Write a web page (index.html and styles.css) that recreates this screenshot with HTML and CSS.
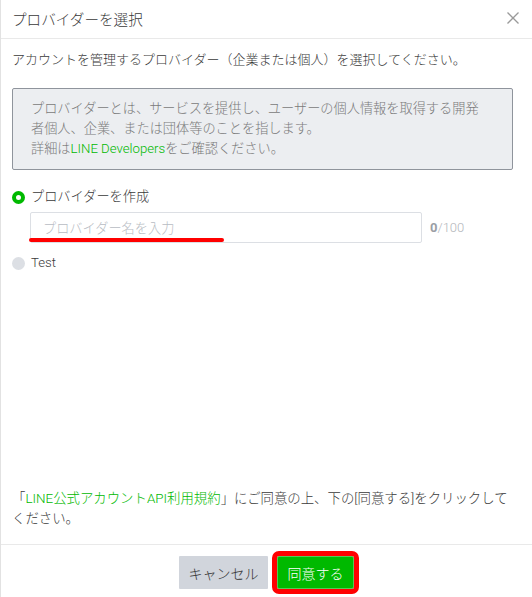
FILE: index.html
```html
<!DOCTYPE html>
<html lang="ja">
<head>
<meta charset="utf-8">
<link rel="stylesheet" href="styles.css">
</head>
<body>
<div class="modal">
  <header class="modal-header">
    <h1 class="modal-title">プロバイダーを選択</h1>
    <button class="close" aria-label="close">
      <svg width="12" height="12" viewBox="0 0 12 12"><path d="M0.5 0.5 L11.5 11.5 M11.5 0.5 L0.5 11.5" stroke="#9a9a9a" stroke-width="1.3" fill="none"/></svg>
    </button>
  </header>
  <main class="modal-body">
    <p class="lead">アカウントを管理するプロバイダー（企業または個人）を選択してください。</p>
    <div class="info">
      <p>プロバイダーとは、サービスを提供し、ユーザーの個人情報を取得する開発者個人、企業、または団体等のことを指します。</p>
      <p>詳細は<a class="link">LINE Developers</a>をご確認ください。</p>
    </div>
    <div class="options">
      <label class="option">
        <span class="radio checked"></span>
        <span>プロバイダーを作成</span>
      </label>
      <div class="input-row">
        <div class="input-wrap">
          <div class="input">プロバイダー名を入力</div>
          <span class="mark"></span>
        </div>
        <span class="count"><b>0</b>/100</span>
      </div>
      <label class="option">
        <span class="radio"></span>
        <span>Test</span>
      </label>
    </div>
    <p class="terms">「<a class="link">LINE公式アカウントAPI利用規約</a>」にご同意の上、下の[同意する]をクリックしてください。</p>
  </main>
  <footer class="modal-footer">
    <button class="btn btn-cancel">キャンセル</button>
    <button class="btn btn-agree">同意する</button>
  </footer>
</div>
</body>
</html>
```
FILE: styles.css
```css
* { box-sizing: border-box; }
html, body { margin: 0; padding: 0; background: #fff; }
body {
  font-family: Roboto, "Noto Sans CJK JP", sans-serif;
  color: #3a3a3a;
  font-size: 13px;
  font-weight: 300;
}
p { margin: 0; }
.modal {
  width: 532px;
  height: 597px;
  border-left: 1px solid #e2e2e2;
  display: flex;
  flex-direction: column;
}
.modal-header {
  height: 39px;
  border-bottom: 1px solid #e9e9e9;
  display: flex;
  align-items: center;
  justify-content: space-between;
  padding: 0 13px 2px 11px;
}
.modal-title {
  margin: 0;
  font-size: 14.6px;
  font-weight: 300;
  color: #3a3a3a;
}
.close {
  border: 0;
  background: none;
  padding: 0;
  width: 12px;
  height: 12px;
  display: flex;
}
.modal-body {
  flex: 1;
  display: flex;
  flex-direction: column;
  padding: 11px 19px 15px 11px;
}
.lead {
  line-height: 20px;
  font-size: 13px;
}
.info {
  margin-top: 18px;
  background: #eceef1;
  border: 1px solid #8f949c;
  border-radius: 2px;
  padding: 10px 24px 10px 18px;
  color: #7a7a7a;
  line-height: 20px;
  font-size: 13.2px;
}
.link { color: #00b900; text-decoration: none; }
.options {
  margin-top: 17px;
  display: flex;
  flex-direction: column;
}
.option {
  display: flex;
  align-items: center;
  gap: 6px;
  line-height: 20px;
  font-size: 13.2px;
}
.radio {
  width: 13px;
  height: 13px;
  border-radius: 50%;
  background: #dcdfe4;
  flex: none;
}
.radio.checked {
  background: #fff;
  border: 4px solid #00b900;
}
.input-row {
  display: flex;
  align-items: center;
  gap: 8px;
  margin: 5px 0 10px 18px;
}
.input-wrap { position: relative; }
.input {
  width: 392px;
  height: 31px;
  border: 1px solid #dcdfe4;
  border-radius: 2px;
  padding: 0 12px;
  display: flex;
  align-items: center;
  color: #b8bcc3;
  font-size: 13.2px;
}
.mark {
  position: absolute;
  left: -1px;
  top: 26px;
  width: 195px;
  height: 4px;
  border-radius: 2px;
  background: #ff0000;
}
.count {
  color: #b3b6bb;
  font-size: 13px;
}
.count b { color: #9a9ea5; font-weight: 700; }
.terms {
  margin-top: auto;
  line-height: 20px;
  font-size: 13.4px;
}
.modal-footer {
  border-top: 1px solid #e9e9e9;
  display: flex;
  justify-content: center;
  align-items: flex-start;
  gap: 9px;
  padding: 11px 0 0 0;
  height: 53px;
}
.btn {
  font-family: inherit;
  font-size: 14px;
  font-weight: 300;
  height: 33px;
  border-radius: 1px;
  padding: 0;
}
.btn-cancel {
  width: 89px;
  background: #d1d5dc;
  border: 0;
  color: #333;
}
.btn-agree {
  width: 77px;
  background: #00b900;
  border: 1px solid #55c955;
  color: #fff;
  outline: 5px solid #ff0000;
  outline-offset: 0;
  border-radius: 2px;
}
```
